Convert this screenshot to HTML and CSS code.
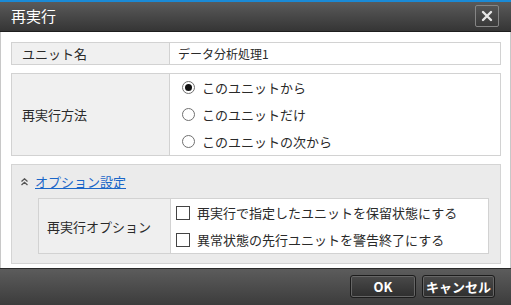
FILE: index.html
```html
<!DOCTYPE html>
<html lang="ja">
<head>
    <meta charset="UTF-8">
    <title>再実行</title>
    <link rel="stylesheet" href="styles.css">
</head>
<body>
    <div class="dialog">
        <div class="titlebar">
            <span class="title">再実行</span>
            <span class="close">
                <svg width="12" height="12" viewBox="0 0 12 12"><path d="M2 2 L10 10 M10 2 L2 10" stroke="#e8e8e8" stroke-width="2.4" stroke-linecap="round"/></svg>
            </span>
        </div>

        <div class="content">
            <table class="form row-name">
                <tr>
                    <th>ユニット名</th>
                    <td class="value">データ分析処理1</td>
                </tr>
            </table>

            <table class="form row-method">
                <tr>
                    <th>再実行方法</th>
                    <td class="choices">
                        <div class="choice"><span class="radio checked"></span>このユニットから</div>
                        <div class="choice"><span class="radio"></span>このユニットだけ</div>
                        <div class="choice"><span class="radio"></span>このユニットの次から</div>
                    </td>
                </tr>
            </table>

            <div class="options">
                <div class="options-head">
                    <svg class="fold" width="7" height="8" viewBox="0 0 7 8"><path d="M0.5 3.5 L3.5 0.8 L6.5 3.5 M0.5 7 L3.5 4.3 L6.5 7" fill="none" stroke="#555" stroke-width="1.3"/></svg>
                    <a href="#" class="link">オプション設定</a>
                </div>
                <table class="form inner">
                    <tr>
                        <th>再実行オプション</th>
                        <td class="choices">
                            <div class="check-row"><span class="check"></span>再実行で指定したユニットを保留状態にする</div>
                            <div class="check-row"><span class="check"></span>異常状態の先行ユニットを警告終了にする</div>
                        </td>
                    </tr>
                </table>
            </div>
        </div>

        <div class="footer">
            <button class="btn btn-ok">OK</button>
            <button class="btn btn-cancel">キャンセル</button>
        </div>
    </div>
</body>
</html>
```

FILE: styles.css
```css
body {
    margin: 0;
    font-family: "Noto Sans CJK JP", "Noto Sans", sans-serif;
    font-size: 12px;
    color: #2a2a2a;
}
.dialog {
    width: 511px;
    height: 305px;
    display: flex;
    flex-direction: column;
    background: #fff;
}
.titlebar {
    border-top: 2px solid #1a8ad6;
    background: linear-gradient(#5a5a5a, #353535);
    border-bottom: 1px solid #1e1e1e;
    display: flex;
    align-items: center;
    justify-content: space-between;
    padding: 0 12px 0 11px;
    height: 29px;
}
.title {
    color: #fff;
    font-size: 15px;
    margin-top: -2px;
}
.close {
    width: 22px;
    height: 20px;
    border: 1px solid #858585;
    border-radius: 2px;
    background: linear-gradient(#555, #3a3a3a);
    display: flex;
    align-items: center;
    justify-content: center;
    margin-top: -2px;
}
.content {
    flex: 1;
    border-left: 1px solid #c8c8c8;
    border-right: 1px solid #c8c8c8;
    padding: 10px 9px 0 10px;
}
.form {
    width: 100%;
    border-collapse: collapse;
    border: 1px solid #d2d2d2;
}
.form th {
    width: 147px;
    background: #f0f0f0;
    font-weight: normal;
    text-align: left;
    padding: 0 0 0 10px;
    border-right: 1px solid #d2d2d2;
    font-size: 13px;
}
.row-name {
    height: 23px;
}
.value {
    padding-left: 8px;
    font-size: 12px;
}
.row-method {
    margin-top: 8px;
    height: 80px;
}
.choices {
    padding: 0 0 0 12px;
}
.choice {
    display: flex;
    align-items: center;
    height: 27px;
    font-size: 13px;
}
.radio {
    width: 11px;
    height: 11px;
    border: 1px solid #707070;
    border-radius: 50%;
    margin-right: 7px;
    display: flex;
    align-items: center;
    justify-content: center;
    background: #fff;
}
.radio.checked::after {
    content: "";
    width: 7px;
    height: 7px;
    border-radius: 50%;
    background: #111;
}
.options {
    margin-top: 8px;
    height: 100px;
    box-sizing: border-box;
    background: #ebebeb;
    border: 1px solid #d4d4d4;
    padding: 0 11px 0 26px;
}
.options-head {
    height: 33px;
    display: flex;
    align-items: center;
    margin-left: -17px;
}
.fold {
    margin-right: 7px;
}
.link {
    color: #1a66c8;
    text-decoration: underline;
    font-size: 13px;
}
.inner {
    height: 55px;
    background: #fff;
}
.inner th {
    width: 123px;
    padding-left: 8px;
    background: #efefef;
}
.inner .choices {
    padding-left: 5px;
}
.check-row {
    display: flex;
    align-items: center;
    height: 27px;
    font-size: 13px;
}
.check {
    width: 12px;
    height: 12px;
    border: 1px solid #444;
    margin-right: 7px;
    background: #fff;
}
.footer {
    height: 37px;
    background: linear-gradient(#5c5c5c, #3c3c3c);
    border-top: 1px solid #2a2a2a;
    box-sizing: border-box;
    display: flex;
    align-items: center;
    justify-content: flex-end;
    gap: 6px;
    padding: 0 16px 2px 0;
}
.btn {
    height: 23px;
    border: 1px solid #1c1c1c;
    border-radius: 3px;
    background: linear-gradient(#4a4a4a, #2e2e2e);
    box-shadow: inset 0 0 0 1px #666;
    color: #fff;
    font-family: "Noto Sans CJK JP", "Noto Sans", sans-serif;
    font-size: 13px;
    font-weight: bold;
    padding: 0;
}
.btn-ok {
    width: 66px;
}
.btn-cancel {
    width: 73px;
}
```
